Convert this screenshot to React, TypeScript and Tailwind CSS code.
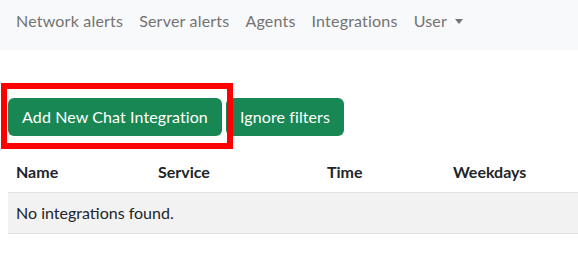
import React from "react";

export default function App() {
  const font = { fontFamily: '"Lato", "Liberation Sans", sans-serif' };
  return (
    <div className="w-[578px] h-[258px] overflow-hidden bg-white" style={font}>
      <nav className="h-[50px] bg-[#f8f9fa] flex items-start pt-[9px] px-2">
        {["Network alerts", "Server alerts", "Agents", "Integrations"].map((t) => (
          <span key={t} className="px-2 text-[16px] leading-6 tracking-[0.2px] text-[#737373]">
            {t}
          </span>
        ))}
        <span className="px-2 text-[16px] leading-6 tracking-[0.2px] text-[#737373] flex items-center">
          User
          <span className="ml-[8px] inline-block w-0 h-0 border-l-[4px] border-r-[4px] border-t-[5px] border-l-transparent border-r-transparent border-t-[#737373]" />
        </span>
      </nav>
      <div className="px-2">
        <div className="relative mt-[48px] flex gap-[4px]">
          <button className="w-[214px] h-[38px] rounded-[6px] bg-[#198754] text-white text-[16px] leading-6 tracking-[0.1px]">
            Add New Chat Integration
          </button>
          <button className="w-[118px] h-[38px] rounded-[6px] bg-[#198754] text-white text-[16px] leading-6 tracking-[0.1px]">
            Ignore filters
          </button>
          <div className="absolute left-[-7px] top-[-15px] w-[232px] h-[66px] border-[6px] border-[#ff0000] pointer-events-none" />
        </div>
        <table className="mt-[16px] w-[600px] border-collapse text-[16px] text-[#212529] table-fixed">
          <thead>
            <tr className="border-b border-[#dee2e6]">
              <th className="w-[142px] text-left font-bold px-2 py-2 leading-6">Name</th>
              <th className="w-[169px] text-left font-bold px-2 py-2 leading-6">Service</th>
              <th className="w-[126px] text-left font-bold px-2 py-2 leading-6">Time</th>
              <th className="text-left font-bold px-2 py-2 leading-6">Weekdays</th>
            </tr>
          </thead>
          <tbody>
            <tr className="border-b border-[#dee2e6] bg-[#f2f2f2]">
              <td colSpan={4} className="px-2 py-2 leading-6">No integrations found.</td>
            </tr>
          </tbody>
        </table>
      </div>
    </div>
  );
}
